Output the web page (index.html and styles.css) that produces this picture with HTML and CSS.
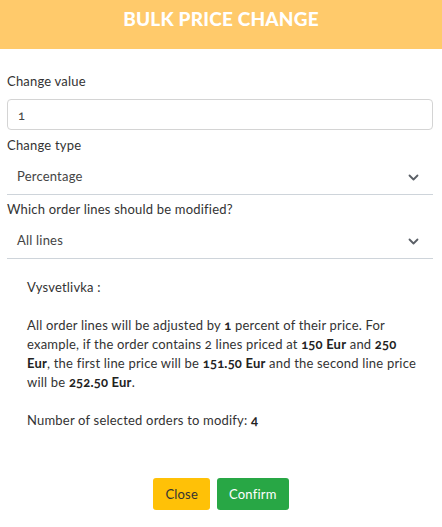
FILE: index.html
```html
<!DOCTYPE html>
<html lang="en">
<head>
<meta charset="utf-8">
<title>Bulk price change</title>
<link rel="stylesheet" href="styles.css">
</head>
<body>
<div class="modal">
  <header class="modal-header">
    <h1 class="modal-title">BULK PRICE CHANGE</h1>
  </header>
  <div class="modal-body">
    <label class="field-label label-first" for="value">Change value</label>
    <input class="text-input" id="value" type="text" value="1">

    <div class="field-label label-next">Change type</div>
    <div class="select">
      <span class="select-value">Percentage</span>
      <svg class="chevron" width="11" height="7" viewBox="0 0 11 7"><path d="M1.5 1.5l4 4 4-4" fill="none" stroke="#5a5f66" stroke-width="1.8" stroke-linecap="round" stroke-linejoin="round"/></svg>
    </div>

    <div class="field-label label-next">Which order lines should be modified?</div>
    <div class="select">
      <span class="select-value">All lines</span>
      <svg class="chevron" width="11" height="7" viewBox="0 0 11 7"><path d="M1.5 1.5l4 4 4-4" fill="none" stroke="#5a5f66" stroke-width="1.8" stroke-linecap="round" stroke-linejoin="round"/></svg>
    </div>

    <div class="explanation">
      <p>Vysvetlivka :</p>
      <p>All order lines will be adjusted by <b>1</b> percent of their price. For example, if the order contains 2 lines priced at <b>150 Eur</b> and <b>250 Eur</b>, the first line price will be <b>151.50 Eur</b> and the second line price will be <b>252.50 Eur</b>.</p>
      <p>Number of selected orders to modify: <b>4</b></p>
    </div>
  </div>
  <footer class="modal-footer">
    <button class="btn btn-close" type="button">Close</button>
    <button class="btn btn-confirm" type="button">Confirm</button>
  </footer>
</div>
</body>
</html>
```
FILE: styles.css
```css
* { box-sizing: border-box; }

html, body {
  margin: 0;
  background: #ffffff;
}

body {
  font-family: Lato, "Open Sans", Arial, sans-serif;
  font-size: 13px;
  line-height: 19.5px;
  letter-spacing: 0.2px;
  color: #333;
  font-variant-numeric: oldstyle-nums;
}

.modal-header {
  height: 49px;
  background: #ffca6b;
  padding-top: 9px;
}

.modal-title {
  margin: 0;
  text-align: center;
  color: #fff;
  font-size: 19px;
  line-height: 19px;
  font-weight: 900;
  letter-spacing: 0.2px;
}

.modal-body {
  padding: 23px 9px 0 7px;
}

.field-label {
  display: block;
  color: #333;
}

.label-first { margin-bottom: 7.5px; }
.label-next { margin-top: 5.5px; }

.text-input {
  display: block;
  width: 100%;
  height: 31px;
  border: 1px solid #d4d4d4;
  border-radius: 4px;
  padding: 0 10px;
  font-family: inherit;
  font-size: 13px;
  color: #444;
  font-variant-numeric: oldstyle-nums;
  outline: none;
}

.select {
  display: flex;
  align-items: center;
  justify-content: space-between;
  height: 35px;
  margin-top: 4.5px;
  padding: 0 14px 0 10px;
  border-bottom: 1px solid #ced4da;
  color: #444;
}

.chevron { display: block; margin-top: 1px; }

.explanation {
  margin-top: 19px;
  padding: 0 17px 0 20px;
  line-height: 19px;
  color: #333;
}

.explanation p { margin: 0 0 19px; }
.explanation p:last-child { margin-bottom: 0; }

.explanation b {
  font-weight: 700;
  color: #222;
}

.modal-footer {
  display: flex;
  justify-content: center;
  gap: 7px;
  padding-top: 48px;
}

.btn {
  height: 32px;
  padding: 0 12px;
  border: none;
  border-radius: 3px;
  font-family: inherit;
  font-size: 13px;
  letter-spacing: inherit;
  cursor: pointer;
}

.btn-close {
  background: #ffc107;
  color: #333;
}

.btn-confirm {
  background: #28a745;
  color: #fff;
}
```
